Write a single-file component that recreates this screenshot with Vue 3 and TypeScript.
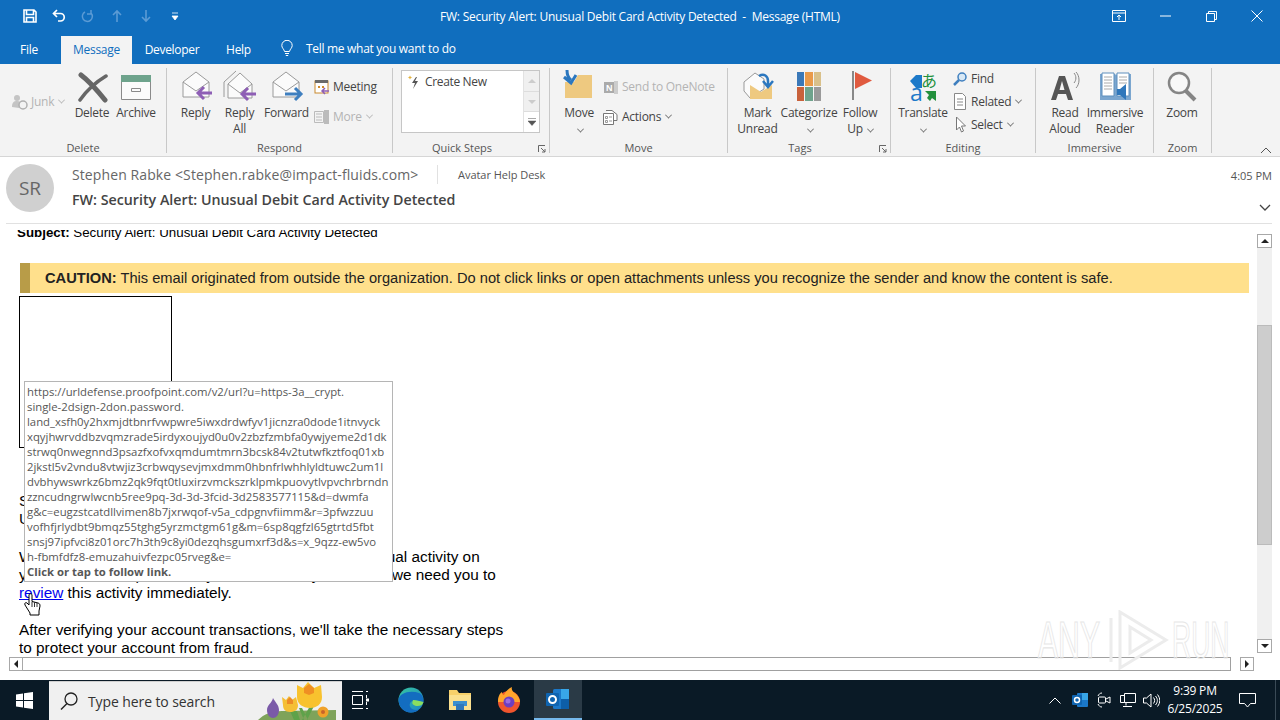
<template>
  <div class="screen">
    <header class="titlebar">
      <div class="qat">
        <button class="qat-btn">
          <svg width="16" height="16" viewBox="0 0 16 16"><path d="M2 2h10l2 2v10H2z M4.500 2.500v4h7v-4 M4.500 14v-4.500h7V14" fill="none" stroke="#fff" stroke-width="1.600"/></svg>
        </button>
        <button class="qat-btn">
          <svg width="16" height="16" viewBox="0 0 16 16"><path d="M6 2 2.500 5.500 6 9M3 5.500h6.500a3.700 3.700 0 0 1 0 7.500H7" fill="none" stroke="#fff" stroke-width="1.700"/></svg>
        </button>
        <button class="qat-btn dim">
          <svg width="16" height="16" viewBox="0 0 16 16"><path d="M11 2v4H7M11 5A5 5 0 1 1 5 4" fill="none" stroke="#5b9bd5" stroke-width="1.500"/></svg>
        </button>
        <button class="qat-btn dim">
          <svg width="12" height="14" viewBox="0 0 12 14"><path d="M6 13V2M2 6l4-4 4 4" fill="none" stroke="#5b9bd5" stroke-width="1.600"/></svg>
        </button>
        <button class="qat-btn dim">
          <svg width="12" height="14" viewBox="0 0 12 14"><path d="M6 1v11M2 8l4 4 4-4" fill="none" stroke="#5b9bd5" stroke-width="1.600"/></svg>
        </button>
        <button class="qat-btn">
          <svg width="8" height="9" viewBox="0 0 8 9"><path d="M1 1h6M1 4h6L4 8z" fill="#fff" stroke="#fff" stroke-width=".8"/></svg>
        </button>
      </div>
      <div class="title">FW: Security Alert: Unusual Debit Card Activity Detected&nbsp; -&nbsp; Message (HTML)</div>
      <div class="win">
        <button class="win-btn">
          <svg width="14" height="12" viewBox="0 0 14 12"><path d="M.500.500h13v11H.500zM.500 3h13M7 10V5M5 7l2-2 2 2" fill="none" stroke="#fff"/></svg>
        </button>
        <button class="win-btn">
          <svg width="11" height="2" viewBox="0 0 11 2"><path d="M0 1h11" stroke="#fff"/></svg>
        </button>
        <button class="win-btn">
          <svg width="11" height="11" viewBox="0 0 11 11"><path d="M.500 2.500h8v8h-8zM2.500 2.500v-2h8v8h-2" fill="none" stroke="#fff"/></svg>
        </button>
        <button class="win-btn">
          <svg width="12" height="12" viewBox="0 0 12 12"><path d="M.500.500l11 11M11.500.500l-11 11" stroke="#fff"/></svg>
        </button>
      </div>
    </header>

    <nav class="tabs">
      <span class="tab file">File</span>
      <span class="tab active">Message</span>
      <span class="tab dev">Developer</span>
      <span class="tab help">Help</span>
      <svg class="bulb" width="12" height="17" viewBox="0 0 12 17"><path d="M3.500 11.500C3 9 .800 8 .800 5.500a5.200 5.200 0 0 1 10.400 0C11.200 8 9 9 8.500 11.500zM4 13.500h4M4.800 15.500h2.400" fill="none" stroke="#fff"/></svg>
      <span class="tell">Tell me what you want to do</span>
    </nav>

    <section class="ribbon">
      <div class="group g-delete">
        <div class="group-body">
          <div class="small-col junk-col">
            <span class="small off">
              <svg width="20" height="16" viewBox="0 0 20 16"><circle cx="6" cy="4" r="3" fill="#c4c4c4"/><path d="M1 13c0-5 2-6 5-6s4 1 4 3l-2 4z" fill="#c4c4c4"/><circle cx="12" cy="11" r="4" fill="#f3f3f3" stroke="#b0b0b0" stroke-width="1.500"/></svg>
              Junk <i class="caret"></i>
            </span>
          </div>
          <div class="big w-delete">
            <svg class="big-ico" width="32" height="32" viewBox="0 0 32 32"><path d="M5 4c8 6 16 15 24 25" fill="none" stroke="#666" stroke-width="5" stroke-linecap="round"/><path d="M30 5C20 11 11 19 4 29" fill="none" stroke="#666" stroke-width="3.500" stroke-linecap="round"/></svg>
            <span>Delete</span>
          </div>
          <div class="big w-archive">
            <svg class="big-ico" width="32" height="32" viewBox="0 0 32 32"><path d="M1.500 10v18.500h29V10" fill="#fbfbfb" stroke="#8a8a8a"/><rect x="1" y="4" width="30" height="7" fill="#6ea38c"/><path d="M11.500 17.500h9v3h-9z" fill="none" stroke="#8a8a8a"/></svg>
            <span>Archive</span>
          </div>
        </div>
        <div class="group-label">Delete</div>
      </div>

      <div class="group g-respond">
        <div class="group-body">
          <div class="big w-reply">
            <svg class="big-ico" width="34" height="34" viewBox="0 0 34 34"><path d="M4 12 17 2l13 10v15H4z" fill="#fbfbfb" stroke="#9a9a9a"/><path d="M4 12l13 9 13-9" fill="none" stroke="#9a9a9a"/><path d="M33 23H20M25 17l-6 6 6 6" fill="none" stroke="#8e5fb5" stroke-width="3"/></svg>
            <span>Reply</span>
          </div>
          <div class="big w-replyall">
            <svg class="big-ico" width="34" height="34" viewBox="0 0 34 34"><path d="M1 12 13 1M1 12v15" fill="none" stroke="#9a9a9a"/><path d="M5 14 17 3l12 11v14H5z" fill="#fbfbfb" stroke="#9a9a9a"/><path d="M5 14l12 9 12-9" fill="none" stroke="#9a9a9a"/><path d="M33 24H20M25 18l-6 6 6 6" fill="none" stroke="#8e5fb5" stroke-width="3"/></svg>
            <span>Reply<br />All</span>
          </div>
          <div class="big w-forward">
            <svg class="big-ico" width="34" height="34" viewBox="0 0 34 34"><path d="M3 12 16 2l13 10v15H3z" fill="#fbfbfb" stroke="#9a9a9a"/><path d="M3 12l13 9 13-9" fill="none" stroke="#9a9a9a"/><path d="M15 24h15M25 18l6 6-6 6" fill="none" stroke="#3f7fbf" stroke-width="3"/></svg>
            <span>Forward</span>
          </div>
          <div class="small-col respond-col">
            <span class="small">
              <svg width="16" height="16" viewBox="0 0 16 16"><rect x="1" y="2" width="13" height="12" fill="#fff" stroke="#c98a2e"/><rect x="1" y="1" width="13" height="3" fill="#6a6a6a"/><path d="M4 7h2v2H4zM8 7h2v2H8z" fill="#d08a2a"/><path d="M15 12H8M11 9l-3 3 3 3" fill="none" stroke="#8e5fb5" stroke-width="1.500"/></svg>
              Meeting
            </span>
            <span class="small off">
              <svg width="16" height="16" viewBox="0 0 16 16"><path d="M.500 2.500h9v11h-9zM2 5h6M2 8h6M2 11h6" fill="none" stroke="#bbb"/><rect x="10" y="1" width="5" height="14" fill="#bbb"/></svg>
              More <i class="caret"></i>
            </span>
          </div>
        </div>
        <div class="group-label">Respond</div>
      </div>

      <div class="group g-quick">
        <div class="group-body">
          <div class="gallery">
            <div class="gallery-list">
              <svg width="14" height="16" viewBox="0 0 14 16"><path d="M3 1.500 3.800 3l1.500.500-1.500.500L3 5.500 2.200 4 .700 3.500 2.200 3z" fill="#e2b23c"/><path d="M9 3 5 9h3l-2 6 5-8H8l2-4z" fill="#555"/></svg>
              <span>Create New</span>
            </div>
            <div class="gallery-scroll">
              <span class="off-arrow"><i class="up"></i></span>
              <span class="off-arrow"><i class="down"></i></span>
              <span class="more-arrow">
                <svg width="8" height="8" viewBox="0 0 8 8"><path d="M0 .500h8M0 3h8L4 7.500z" fill="#555" stroke="#555" stroke-width=".5"/></svg>
              </span>
            </div>
          </div>
        </div>
        <div class="group-label">Quick Steps</div>
        <svg class="launcher" width="8" height="8" viewBox="0 0 8 8"><path d="M.500 7V.500H7M3 3l4 4M4 7h3V4" fill="none" stroke="#666"/></svg>
      </div>

      <div class="group g-move">
        <div class="group-body">
          <div class="big w-move">
            <svg class="big-ico" width="34" height="34" viewBox="0 0 34 34"><path d="M16 5h14v23H3V12h9z" fill="#eec980"/><path d="M5 0c0 5 1 8 4 10M2 7l7 6 5-8" fill="none" stroke="#2b77bf" stroke-width="3"/></svg>
            <span>Move<br /><i class="caret"></i></span>
          </div>
          <div class="small-col move-col">
            <span class="small off">
              <svg width="16" height="16" viewBox="0 0 16 16"><rect x="1" y="3" width="10" height="11" fill="#aaa"/><rect x="11" y="2" width="4" height="13" fill="#ccc"/><text x="3" y="12" font-size="9" font-weight="700" fill="#fff" font-family="Liberation Sans">N</text></svg>
              Send to OneNote
            </span>
            <span class="small">
              <svg width="16" height="16" viewBox="0 0 16 16"><path d="M.500 4.500h10v11H.500zM3 1.500h6l5 4v6h-3" fill="#fff" stroke="#777"/><path d="M2.500 7.500h2v2h-2zM2.500 11.500h2v2h-2zM6 8h3M6 12h3" fill="none" stroke="#999"/></svg>
              Actions <i class="caret"></i>
            </span>
          </div>
        </div>
        <div class="group-label">Move</div>
      </div>

      <div class="group g-tags">
        <div class="group-body">
          <div class="big w-mark">
            <svg class="big-ico" width="34" height="34" viewBox="0 0 34 34"><path d="M3 12 14 3l9 6v10L9 28l-6-7z" fill="#fbfbfb" stroke="#999"/><path d="M9 15l11 7 11-7v14H9z" fill="#eec980"/><path d="M18 6c5-3 9 0 9 5v5M22 11l5 6 5-6" fill="none" stroke="#2b77bf" stroke-width="2.500"/></svg>
            <span>Mark<br />Unread</span>
          </div>
          <div class="big w-cat">
            <svg class="big-ico cat-ico" width="24" height="30" viewBox="0 0 24 30"><rect x="0" y="0" width="7" height="14" fill="#3a78b8"/><rect x="8" y="0" width="8" height="14" fill="#e99a4a"/><rect x="17" y="0" width="7" height="14" fill="#d9c08a"/><rect x="0" y="15" width="7" height="14" fill="#c8613b"/><rect x="8" y="15" width="8" height="14" fill="#6ea38c"/><rect x="17" y="15" width="7" height="14" fill="#9a9a9a"/></svg>
            <span>Categorize<br /><i class="caret"></i></span>
          </div>
          <div class="big w-follow">
            <svg class="big-ico" width="24" height="34" viewBox="0 0 24 34"><path d="M5 1v29" stroke="#888" stroke-width="2"/><path d="M7 2l17 8.500L7 19z" fill="#e05a3f"/></svg>
            <span>Follow<br />Up <i class="caret"></i></span>
          </div>
        </div>
        <div class="group-label">Tags</div>
        <svg class="launcher" width="8" height="8" viewBox="0 0 8 8"><path d="M.500 7V.500H7M3 3l4 4M4 7h3V4" fill="none" stroke="#666"/></svg>
      </div>

      <div class="group g-editing">
        <div class="group-body">
          <div class="big w-translate">
            <svg class="big-ico" width="30" height="34" viewBox="0 0 30 34"><path d="M14 5v13H8L2 11l6-6z" fill="#1c79c9"/><text x="13" y="17" font-size="16" fill="#22903c" font-family="Noto Sans CJK JP, sans-serif">あ</text><text x="2" y="31" font-size="23" fill="#1c79c9" font-family="Open Sans">a</text><path d="M17 21h11v10l-4-3-2 3-3-3 2-3z" fill="#22903c"/></svg>
            <span>Translate<br /><i class="caret"></i></span>
          </div>
          <div class="small-col editing-col">
            <span class="small">
              <svg width="16" height="16" viewBox="0 0 16 16"><circle cx="10" cy="6" r="4" fill="#d8e8f5" stroke="#3f7fbf" stroke-width="1.500"/><path d="M7 9l-5 5" stroke="#3f7fbf" stroke-width="2.500"/></svg>
              Find
            </span>
            <span class="small">
              <svg width="16" height="18" viewBox="0 0 16 18"><path d="M2.500.500h8l3 3v13h-11zM5 6h6M5 9h6M5 12h6" fill="#fff" stroke="#888"/></svg>
              Related <i class="caret"></i>
            </span>
            <span class="small">
              <svg width="16" height="18" viewBox="0 0 16 18"><path d="M4.500 1v13l3-3 2 5 2-1-2-5h4z" fill="#fff" stroke="#777"/></svg>
              Select <i class="caret"></i>
            </span>
          </div>
        </div>
        <div class="group-label">Editing</div>
      </div>

      <div class="group g-immersive">
        <div class="group-body">
          <div class="big w-read">
            <svg class="big-ico" width="34" height="34" viewBox="0 0 34 34"><path d="M11 6h6l8 24h-5l-2-6h-8l-2 6H3zM11.500 20h5L14 11z" fill="#555" fill-rule="evenodd"/><path d="M26 3c2.500 3 2.500 7 0 10M28 2c4 4 4 12 0 16" fill="none" stroke="#888"/></svg>
            <span>Read<br />Aloud</span>
          </div>
          <div class="big w-immersive">
            <svg class="big-ico" width="34" height="34" viewBox="0 0 34 34"><path d="M2 4h15l1 1 1-1h14v26H2z" fill="#7ba6cf"/><path d="M4 3h12v23H4zM19 3h12v23H19z" fill="#fff" stroke="#5e8fbd"/><path d="M6 7h8M6 10h8M6 13h8M6 16h8M6 19h8M21 7h8M21 10h8M21 13h8" stroke="#aaa"/><path d="M19 19h3l6-5v16l-6-5h-3z" fill="#2f77bb"/></svg>
            <span>Immersive<br />Reader</span>
          </div>
        </div>
        <div class="group-label">Immersive</div>
      </div>

      <div class="group g-zoom">
        <div class="group-body">
          <div class="big w-zoom">
            <svg class="big-ico" width="32" height="34" viewBox="0 0 32 34"><circle cx="13" cy="13" r="10" fill="#f8f8f8" stroke="#858585" stroke-width="2.500"/><path d="M20 21l9 9" stroke="#858585" stroke-width="4"/></svg>
            <span>Zoom</span>
          </div>
        </div>
        <div class="group-label">Zoom</div>
      </div>

      <svg class="collapse" width="12" height="7" viewBox="0 0 12 7"><path d="M1 6l5-5 5 5" fill="none" stroke="#555"/></svg>
    </section>

    <section class="msg-head">
      <div class="avatar">SR</div>
      <div class="head-text">
        <div class="head-top">
          <span class="sender">Stephen Rabke &lt;Stephen.rabke@impact-fluids.com&gt;</span>
          <span class="to">Avatar Help Desk</span>
        </div>
        <div class="subject">FW: Security Alert: Unusual Debit Card Activity Detected</div>
      </div>
      <div class="head-right">
        <span class="time">4:05 PM</span>
        <svg width="12" height="7" viewBox="0 0 12 7"><path d="M1 1l5 5 5-5" fill="none" stroke="#444" stroke-width="1.300"/></svg>
      </div>
    </section>

    <main class="reader">
      <div class="reader-top">
        <div class="pane">
          <div class="mail">
            <p class="subj-line"><b>Subject:</b> Security Alert: Unusual Debit Card Activity Detected</p>
            <div class="caution"><b>CAUTION:</b> This email originated from outside the organization. Do not click links or open attachments unless you recognize the sender and know the content is safe.</div>
            <div class="broken"></div>
            <p class="para first">Security Team<br />Unusual Activity Notice</p>
            <p class="para second">We have detected recent transactions with some unusual activity on<br />your account. To protect all your funds and your cards, we need you to<br /><a class="link">review</a> this activity immediately.</p>
            <p class="para">After verifying your account transactions, we'll take the necessary steps<br />to protect your account from fraud.</p>
          </div>
          <div class="tooltip">
            <div v-for="line in urlLines" :key="line">{{ line }}</div>
            <b>Click or tap to follow link.</b>
          </div>
          <svg class="hand" width="17" height="23" viewBox="0 0 17 23"><path d="M5 1.500c1-1 2-1 3 0v7l6 1.500c1.500.5 2 1 2 3l-1 5v4H6v-2L1 12c-1-2 1-3 2-2l2 2z" fill="#fff" stroke="#000"/><path d="M8 9v5M10.500 9.500V14M13 10v4" stroke="#000" stroke-width=".8"/></svg>
        </div>
        <div class="vscroll">
          <span class="sb-btn"><i class="up dark"></i></span>
          <div class="v-track"><div class="v-thumb"></div></div>
          <span class="sb-btn"><i class="down dark"></i></span>
        </div>
      </div>
      <div class="hscroll">
        <span class="sb-btn"><i class="left"></i></span>
        <div class="h-track"></div>
        <span class="sb-btn right-btn"><i class="right"></i></span>
      </div>
      <div class="mark">
        <span class="any">ANY</span>
        <svg width="62" height="60" viewBox="0 0 62 60"><path d="M3 8v44M12 2l46 28-46 28zM22 17l21 13-21 13z" fill="none" stroke="#ececec" stroke-width="3"/></svg>
        <span class="run">RUN</span>
      </div>
    </main>

    <footer class="taskbar">
      <div class="start">
        <svg width="17" height="17" viewBox="0 0 17 17"><path d="M0 2.400 7 1.400V8H0zM8 1.200 17 0v8H8zM0 9h7v6.600L0 14.600zM8 9h9v8l-9-1.200z" fill="#fff"/></svg>
      </div>
      <div class="search">
        <svg width="20" height="20" viewBox="0 0 20 20"><circle cx="12" cy="8" r="6" fill="none" stroke="#222" stroke-width="1.300"/><path d="M8 12.500 2 18.500" stroke="#222" stroke-width="1.500"/></svg>
        <span>Type here to search</span>
        <svg class="flowers" width="84" height="39" viewBox="0 1 84 39">
          <path d="M0 40c6-6 14-9 24-9l54-1v10z" fill="#7ea35a"/>
          <path d="M15 18c2 4 6 7 6 12s-3 8-6 8-6-3-6-8 5-7 6-12z" fill="#7a5aa8"/>
          <path d="M32 31l4 9h6l-3-9zM52 26l-8 14h5l7-14zM44 28l6 12h-4l-5-12z" fill="#5fa24a"/>
          <path d="M24 17l4 3 3-4 3 4 4-3 2 8c0 5-3 7-8 7s-7-3-7-7z" fill="#f5bf34"/>
          <path d="M29 20l3-3 3 3v4h-6z" fill="#ec8b26"/>
          <path d="M39 5l6 3 5-6 6 6 7-3 1 12c0 7-5 11-12 11s-13-4-13-11z" fill="#f8c22e"/>
          <path d="M46 8l5-4 5 4v5l-5 2-5-2z" fill="#ef8f23"/>
          <circle cx="65" cy="32" r="5.500" fill="#f0a22a"/><circle cx="65" cy="32" r="2" fill="#c9642a"/>
        </svg>
      </div>
      <div class="task-icons">
        <span class="task">
          <svg width="20" height="20" viewBox="0 0 20 20"><path d="M1 1.500h11M1 18.500h11M1.500 5.500h10v9h-10zM15 1.500h2M15 18.500h2M15.500 5v3M15.500 12v3" fill="none" stroke="#fff"/><rect x="15" y="8.500" width="3" height="3" fill="#fff"/></svg>
        </span>
        <span class="task">
          <svg width="26" height="26" viewBox="0 0 26 26">
            <defs>
              <linearGradient id="edgeA" x1="0" y1="0" x2="1" y2="1"><stop offset="0" stop-color="#37c6a0"/><stop offset="1" stop-color="#1b84c8"/></linearGradient>
            </defs>
            <circle cx="13" cy="13" r="12.500" fill="url(#edgeA)"/>
            <path d="M.500 13C1 22 8 26 13 25.500c4 0 6-1 8-3-4 1-8 0-9-3s1-5 3-6c3-1 5 0 10.500 2C25.500 10 24 7 21 6 12 3 1 6 .500 13z" fill="#136dc0"/>
            <path d="M15 13c3 0 6 1 10.500 2-1 3-3 4-6 4s-6-2-5-4z" fill="#8ade5f"/>
          </svg>
        </span>
        <span class="task">
          <svg width="24" height="22" viewBox="0 0 24 22"><path d="M1 1h8l2 3h12v17H1z" fill="#f7d06a"/><path d="M1 6h22v15H1z" fill="#fbe08e"/><rect x="5" y="12" width="14" height="5" fill="#3a8fd0"/><rect x="8" y="15" width="8" height="6" fill="#2f77bb"/></svg>
        </span>
        <span class="task">
          <svg width="24" height="26" viewBox="0 0 24 26">
            <circle cx="12" cy="15" r="11" fill="#f0552d"/>
            <path d="M1 15C1 9 3 6 5 5c0 2 1 3 2 3 1-3 5-7 8-8-1 3 1 5 4 7 3 3 4 6 4 8z" fill="#ffa52c"/>
            <circle cx="12" cy="15" r="5.500" fill="#6d3fc0"/>
            <circle cx="11" cy="14" r="2.500" fill="#9c6be0"/>
          </svg>
        </span>
        <span class="task active-task">
          <svg width="26" height="22" viewBox="0 0 26 22"><rect x="8" y="1" width="16" height="20" rx="1.500" fill="#1b78c9"/><rect x="16" y="1" width="8" height="10" fill="#38a6e8"/><rect x="16" y="11" width="8" height="10" fill="#0d5ea8"/><rect x="1" y="5" width="13" height="13" rx="1" fill="#0f64b0"/><circle cx="7.500" cy="11.500" r="3.500" fill="none" stroke="#fff" stroke-width="2"/></svg>
        </span>
      </div>
      <div class="tray">
        <svg class="t1" width="12" height="7" viewBox="0 0 12 7"><path d="M.500 6.500 6 1l5.500 5.500" fill="none" stroke="#fff"/></svg>
        <svg class="t2" width="16" height="16" viewBox="0 0 16 16"><rect x="5" y="1" width="11" height="14" rx="1" fill="#1b78c9"/><rect x="10" y="1" width="6" height="7" fill="#38a6e8"/><rect x="0" y="3" width="10" height="10" rx="1" fill="#0f64b0"/><circle cx="5" cy="8" r="2.500" fill="none" stroke="#fff" stroke-width="1.500"/></svg>
        <svg class="t3" width="16" height="16" viewBox="0 0 16 16"><path d="M2 4C3 2 4 1 6 1M2 12c1 2 2 3 4 3" fill="none" stroke="#fff"/><rect x="2.500" y="5" width="7" height="6" rx="1" fill="none" stroke="#fff"/><path d="M10 7l4-2v6l-4-2" fill="none" stroke="#fff"/></svg>
        <svg class="t4" width="16" height="15" viewBox="0 0 16 15"><path d="M4.500.500h11v9h-11zM.500 2.500h4v7h-4zM6 9.500v3M3 13.500h9" fill="#0a1a26" stroke="#fff"/></svg>
        <svg class="t5" width="17" height="15" viewBox="0 0 17 15"><path d="M.500 5h3L8 1v13L3.500 10h-3zM10.500 4.500c1.500 2 1.500 4 0 6M12.500 3c2.500 3 2.500 6 0 9M14.500 1.500c3 4 3 8 0 12" fill="none" stroke="#fff"/></svg>
        <div class="clock"><div>9:39 PM</div><div>6/25/2025</div></div>
        <svg class="notif" width="17" height="15" viewBox="0 0 17 15"><path d="M.500.500h16v10h-5l-3 3.500-3-3.500h-5z" fill="none" stroke="#fff"/></svg>
        <span class="show-desk"></span>
      </div>
    </footer>
  </div>
</template>

<script setup lang="ts">
const urlLines: string[] = [
  'https://urldefense.proofpoint.com/v2/url?u=https-3a__crypt.',
  'single-2dsign-2don.password.',
  'land_xsfh0y2hxmjdtbnrfvwpwre5iwxdrdwfyv1jicnzra0dode1itnvyck',
  'xqyjhwrvddbzvqmzrade5irdyxoujyd0u0v2zbzfzmbfa0ywjyeme2d1dk',
  'strwq0nwegnnd3psazfxofvxqmdumtmrn3bcsk84v2tutwfkztfoq01xb',
  '2jkstl5v2vndu8vtwjiz3crbwqysevjmxdmm0hbnfrlwhhlyldtuwc2um1l',
  'dvbhywswrkz6bmz2qk9fqt0tluxirzvmckszrklpmkpuovytlvpvchrbrndn',
  'zzncudngrwlwcnb5ree9pq-3d-3d-3fcid-3d2583577115&d=dwmfa',
  'g&c=eugzstcatdllvimen8b7jxrwqof-v5a_cdpgnvfiimm&r=3pfwzzuu',
  'vofhfjrlydbt9bmqz55tghg5yrzmctgm61g&m=6sp8qgfzl65gtrtd5fbt',
  'snsj97ipfvci8z01orc7h3th9c8yi0dezqhsgumxrf3d&s=x_9qzz-ew5vo',
  'h-fbmfdfz8-emuzahuivfezpc05rveg&e=',
]
</script>

<style>
html,
body {
  margin: 0;
  overflow: hidden;
}
</style>

<style scoped>
.screen {
  width: 1280px;
  height: 720px;
  display: flex;
  flex-direction: column;
  background: #fff;
  font-family: "Open Sans", "Noto Sans", sans-serif;
  color: #444;
  overflow: hidden;
}
button {
  border: 0;
  background: none;
  padding: 0;
  display: flex;
  align-items: center;
  justify-content: center;
}

.titlebar {
  height: 32px;
  flex: none;
  background: #106ebe;
  display: grid;
  grid-template-columns: 1fr auto 1fr;
  align-items: center;
  color: #fff;
}
.qat {
  display: flex;
  padding-left: 15px;
}
.qat-btn {
  width: 29px;
  height: 32px;
}
.title {
  font-size: 12px;
  letter-spacing: -0.24px;
  white-space: nowrap;
}
.win {
  display: flex;
  justify-content: flex-end;
  align-items: center;
}
.win-btn {
  width: 46px;
  height: 32px;
}

.tabs {
  height: 32px;
  flex: none;
  background: #106ebe;
  display: flex;
  align-items: flex-end;
  color: #fff;
  font-size: 12px;
  letter-spacing: -0.3px;
}
.tab {
  height: 28px;
  display: flex;
  align-items: center;
  justify-content: center;
  padding-bottom: 2px;
  box-sizing: border-box;
}
.file { width: 61px; padding-right: 3px; }
.active {
  width: 71px;
  background: #f3f3f3;
  color: #106ebe;
}
.dev { width: 80px; }
.help { width: 53px; }
.bulb {
  margin: 0 0 7px 16px;
}
.tell {
  margin: 0 0 7px 13px;
}

.ribbon {
  position: relative;
  height: 93px;
  flex: none;
  box-sizing: border-box;
  background: #f3f3f3;
  border-bottom: 1px solid #d6d6d6;
  display: flex;
  font-size: 12px;
  letter-spacing: -0.25px;
  color: #444;
}
.group {
  position: relative;
  flex: none;
  display: flex;
  flex-direction: column;
  box-sizing: border-box;
  margin: 4px 0 3px;
  border-right: 1px solid #c8c8c8;
}
.group-body {
  flex: 1;
  display: flex;
  padding-top: 2px;
}
.group-label {
  height: 16px;
  line-height: 16px;
  margin-bottom: -3px;
  text-align: center;
  font-size: 11px;
  color: #555;
  letter-spacing: 0;
}
.g-delete { width: 167px; }
.g-delete .group-body { padding-left: 11px; }
.g-respond { width: 226px; }
.g-respond .group-body { padding-left: 6px; }
.g-quick { width: 157px; }
.g-quick .group-body { padding-left: 8px; }
.g-quick .group-label { padding-right: 18px; }
.g-move { width: 178px; }
.g-move .group-body { padding-left: 9px; }
.g-tags { width: 163px; }
.g-tags .group-body { padding-left: 7px; }
.g-tags .group-label { padding-right: 18px; }
.g-editing { width: 145px; }
.g-editing .group-body { padding-left: 7px; }
.g-immersive { width: 118px; }
.g-immersive .group-body { padding-left: 7px; }
.g-zoom { width: 58px; }
.g-zoom .group-body { padding-left: 6px; }

.big {
  flex: none;
  display: flex;
  flex-direction: column;
  align-items: center;
  text-align: center;
  line-height: 16px;
  white-space: nowrap;
}
.big-ico {
  height: 34px;
  margin-bottom: 1px;
}
.w-delete { width: 44px; margin-left: 5px; }
.w-archive { width: 44px; }
.w-reply { width: 45px; }
.w-replyall { width: 43px; }
.w-forward { width: 51px; }
.w-move { width: 40px; }
.w-mark { width: 45px; }
.w-cat { width: 58px; }
.w-follow { width: 44px; }
.w-translate { width: 50px; }
.w-read { width: 44px; }
.w-immersive { width: 60px; margin-left: -2px; }
.w-zoom { width: 44px; }
.cat-ico { height: 30px; margin: 2px 0 3px; }

.small-col {
  display: flex;
  flex-direction: column;
  white-space: nowrap;
}
.small {
  display: flex;
  align-items: center;
  gap: 3px;
  height: 23px;
}
.off {
  color: #b4b4b4;
}
.junk-col {
  width: 54px;
  padding-top: 20px;
}
.junk-col .small svg {
  margin-right: -3px;
}
.respond-col {
  margin-left: 2px;
  padding-top: 5px;
  gap: 7px;
}
.move-col {
  margin-left: 4px;
  padding-top: 5px;
  gap: 7px;
}
.editing-col {
  margin: -3px 0 0 4px;
}
.caret {
  display: inline-block;
  width: 4px;
  height: 4px;
  border-right: 1px solid #777;
  border-bottom: 1px solid #777;
  transform: rotate(45deg) translate(-1px, -1px);
  margin-left: 2px;
}
.off .caret {
  border-color: #bbb;
}

.gallery {
  width: 139px;
  height: 63px;
  box-sizing: border-box;
  border: 1px solid #c6c6c6;
  background: #fff;
  display: flex;
}
.gallery-list {
  flex: 1;
  display: flex;
  align-items: flex-start;
  gap: 4px;
  padding: 3px 0 0 5px;
  line-height: 16px;
  letter-spacing: -0.35px;
}
.gallery-scroll {
  width: 15px;
  display: flex;
  flex-direction: column;
  border-left: 1px solid #e2e2e2;
}
.off-arrow,
.more-arrow {
  flex: 1;
  display: flex;
  align-items: center;
  justify-content: center;
  background: #f0f0f0;
  border-bottom: 1px solid #ddd;
}
.more-arrow {
  background: #fff;
  border-bottom: 0;
}
.up,
.down,
.left,
.right {
  display: block;
  width: 0;
  height: 0;
  border: 4px solid transparent;
}
.up {
  border-top: 0;
  border-bottom-color: #ccc;
}
.down {
  border-bottom: 0;
  border-top-color: #ccc;
}
.up.dark { border-bottom-color: #222; }
.down.dark { border-top-color: #222; }
.left {
  border-left: 0;
  border-right-color: #222;
}
.right {
  border-right: 0;
  border-left-color: #222;
}
.launcher {
  position: absolute;
  right: 3px;
  bottom: 0;
}
.collapse {
  position: absolute;
  right: 8px;
  bottom: 2px;
}

.msg-head {
  height: 67px;
  flex: none;
  box-sizing: border-box;
  margin: 0 8px 0 6px;
  border-bottom: 1px solid #e1e1e1;
  display: flex;
}
.avatar {
  width: 48px;
  height: 48px;
  margin-top: 7px;
  border-radius: 50%;
  background: #d0d0d0;
  color: #666;
  font-size: 19px;
  line-height: 48px;
  text-align: center;
}
.head-text {
  margin-left: 18px;
  flex: 1;
  padding-top: 7px;
}
.head-top {
  display: flex;
  align-items: center;
  height: 21px;
}
.sender {
  font-size: 14px;
  color: #666;
  letter-spacing: 0.1px;
  width: 365px;
  white-space: nowrap;
  border-right: 1px solid #e1e1e1;
}
.to {
  margin-left: 20px;
  font-size: 11px;
  color: #555;
  letter-spacing: -0.03px;
}
.subject {
  margin-top: 5px;
  font-size: 14.25px;
  font-weight: 600;
  color: #444;
  line-height: 20px;
}
.head-right {
  display: flex;
  flex-direction: column;
  align-items: flex-end;
  padding-top: 12px;
}
.time {
  font-size: 11px;
  color: #555;
  line-height: 14px;
}
.head-right svg {
  margin: 21px 1px 0 0;
}

.reader {
  position: relative;
  flex: 1;
  min-height: 0;
  display: flex;
  flex-direction: column;
  font-family: "Liberation Sans", Arial, sans-serif;
}
.reader-top {
  flex: none;
  height: 433px;
  display: flex;
  padding-top: 6px;
  box-sizing: border-box;
}
.pane {
  position: relative;
  flex: 1;
  overflow: hidden;
}
.mail {
  margin-top: -6px;
  padding-left: 19px;
  width: 1249px;
  box-sizing: border-box;
  font-size: 15.33px;
  line-height: 18px;
  color: #000;
}
.subj-line {
  margin: 0 0 0 -2px;
  font-size: 13.33px;
}
.caution {
  margin: 21px 0 3px 1px;
  height: 30px;
  box-sizing: border-box;
  background: #ffe08c;
  border-left: 10px solid #b89c48;
  padding-left: 15px;
  font-size: 14.67px;
  line-height: 30px;
  white-space: nowrap;
  color: #222;
}
.broken {
  width: 153px;
  height: 152px;
  box-sizing: border-box;
  border: 1px solid #000;
}
.para {
  margin: 19px 0 0;
  white-space: nowrap;
}
.para.first {
  margin-top: 44px;
}
.para.second {
  margin-top: 20px;
}
.link {
  color: #0000ee;
  text-decoration: underline;
}
.tooltip {
  position: absolute;
  left: 24px;
  top: 151px;
  width: 369px;
  height: 201px;
  box-sizing: border-box;
  padding: 2px 2px;
  background: #fff;
  border: 1px solid #b5b5b5;
  font-family: "Open Sans", sans-serif;
  font-size: 11.34px;
  line-height: 15px;
  color: #575757;
  white-space: nowrap;
  overflow: hidden;
}
.hand {
  position: absolute;
  left: 24px;
  top: 363px;
}

.vscroll {
  width: 15px;
  margin: 4px 8px 0 0;
  display: flex;
  flex-direction: column;
  background: #f0f0f0;
  height: 419px;
}
.sb-btn {
  flex: none;
  width: 14px;
  height: 14px;
  box-sizing: border-box;
  border: 1px solid #a8a8a8;
  background: #fff;
  display: flex;
  align-items: center;
  justify-content: center;
}
.vscroll .sb-btn {
  width: 15px;
}
.v-track {
  flex: 1;
  padding-top: 77px;
}
.v-thumb {
  height: 220px;
  background: #cdcdcd;
  border: 1px solid #bbb;
  box-sizing: border-box;
}
.hscroll {
  margin-left: 9px;
  height: 14px;
  width: 1245px;
  display: flex;
  box-sizing: border-box;
}
.h-track {
  flex: 1;
  border-top: 1px solid #a0a0a0;
  border-bottom: 1px solid #a0a0a0;
  border-right: 1px solid #a0a0a0;
}
.right-btn {
  margin-left: 9px;
}
.mark {
  position: absolute;
  left: 1038px;
  top: 386px;
  display: flex;
  align-items: center;
  font-family: "Liberation Sans", sans-serif;
  font-size: 52px;
  line-height: 60px;
  color: transparent;
  -webkit-text-stroke: 1.200px #e6e6e6;
  pointer-events: none;
}
.mark span {
  display: inline-block;
  transform-origin: left center;
  white-space: nowrap;
}
.any {
  width: 70px;
  transform: scaleX(0.58);
}
.run {
  width: 58px;
  margin-left: 2px;
  transform: scaleX(0.51);
}

.taskbar {
  height: 40px;
  flex: none;
  background: #0a1a26;
  display: flex;
  color: #fff;
}
.start {
  width: 49px;
  display: flex;
  align-items: center;
  justify-content: center;
}
.search {
  position: relative;
  width: 293px;
  margin-top: 1px;
  background: #f0f0f0;
  border-top: 1px solid #cfcfcf;
  box-sizing: border-box;
  display: flex;
  align-items: center;
  padding-left: 10px;
  gap: 9px;
  color: #333;
  font-size: 14px;
  letter-spacing: -0.1px;
}
.flowers {
  position: absolute;
  right: 0;
  bottom: 0;
}
.task-icons {
  display: flex;
}
.task {
  width: 49px;
  display: flex;
  align-items: center;
  justify-content: center;
  box-sizing: border-box;
}
.task:first-child {
  width: 43px;
  padding-right: 6px;
}
.task:nth-child(2) {
  width: 52px;
}
.task:nth-child(3) {
  width: 46px;
}
.task:nth-child(4) {
  width: 51px;
}
.active-task {
  width: 48px;
  background: #2a3a46;
  border-bottom: 2px solid #76b9ed;
}
.tray {
  flex: 1;
  position: relative;
  display: flex;
  align-items: center;
  justify-content: flex-end;
}
.t1 { margin-right: 11px; }
.t2 { margin-right: 8px; }
.t3 { margin-right: 8px; }
.t4 { margin-right: 7px; }
.t5 { margin-right: 4px; }
.clock {
  width: 62px;
  text-align: center;
  font-size: 12px;
  line-height: 18px;
  letter-spacing: -0.2px;
  white-space: nowrap;
}
.notif {
  margin: 0 24px 0 13px;
}
.show-desk {
  position: absolute;
  right: 4px;
  top: 0;
  bottom: 0;
  width: 1px;
  background: #3a4a56;
}
</style>
